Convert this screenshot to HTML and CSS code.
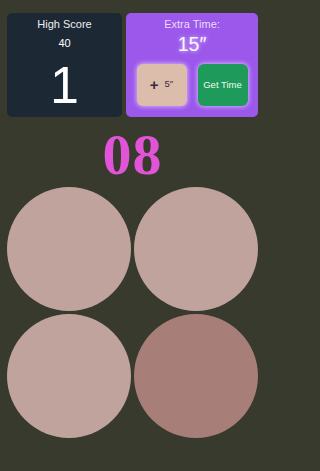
FILE: index.html
```html
<!DOCTYPE html>
<html>
<head>
<meta charset="utf-8">
<link rel="stylesheet" href="styles.css">
</head>
<body>
<div class="top">
  <div class="card score">
    <div class="label">High Score</div>
    <div class="best">40</div>
    <div class="current">1</div>
  </div>
  <div class="card extra">
    <div class="label">Extra Time:</div>
    <div class="time">15″</div>
    <div class="buttons">
      <div class="btn add"><span class="plus">+</span><span class="five">5″</span></div>
      <div class="btn get">Get Time</div>
    </div>
  </div>
</div>
<div class="counter">08</div>
<div class="grid">
  <div class="circle"></div>
  <div class="circle"></div>
  <div class="circle"></div>
  <div class="circle dark"></div>
</div>
</body>
</html>
```
FILE: styles.css
```css
html, body {
  margin: 0;
  padding: 0;
  background: #383a2e;
  font-family: "Liberation Sans", Arial, sans-serif;
  width: 265px;
  height: 471px;
  overflow: hidden;
}
.top {
  display: flex;
  gap: 4px;
  padding: 13px 7px 0 7px;
}
.card {
  height: 104px;
  border-radius: 5px;
  box-sizing: border-box;
  padding-top: 5px;
  display: flex;
  flex-direction: column;
  align-items: center;
  color: #fff;
}
.score {
  width: 115px;
  background: #1c2833;
}
.extra {
  width: 132px;
  background: #9b58eb;
}
.label {
  font-size: 11px;
  line-height: 13px;
  color: #eef0f2;
}
.extra .label {
  color: #eadcfb;
}
.best {
  margin-top: 6px;
  font-size: 11px;
  line-height: 13px;
}
.current {
  margin-top: 8.5px;
  font-size: 52px;
  line-height: 52px;
}
.time {
  margin-top: 1.5px;
  font-size: 19.5px;
  line-height: 22px;
  color: #fbf6ff;
  text-shadow: 0 0 4px rgba(255,255,255,0.7);
}
.buttons {
  margin-top: 9px;
  display: flex;
  gap: 11px;
}
.btn {
  width: 50px;
  height: 42px;
  border-radius: 6px;
  display: flex;
  align-items: center;
  justify-content: center;
  box-shadow: 0 0 4px 1px rgba(225,200,255,0.75);
}
.add {
  background: #dcbcab;
  color: #3b2a3e;
  gap: 6px;
}
.plus {
  font-size: 15px;
  font-weight: bold;
  line-height: 15px;
}
.five {
  font-size: 9.5px;
  line-height: 10px;
  margin-top: -2px;
}
.get {
  background: #1e9a5a;
  color: #eefaf2;
  font-size: 9.5px;
}
.counter {
  margin-top: 9px;
  height: 58px;
  text-align: center;
  font-family: "Liberation Serif", "Times New Roman", serif;
  font-weight: bold;
  font-size: 58px;
  line-height: 58px;
  color: #e153d7;
  letter-spacing: 1px;
}
.grid {
  margin: 3px 0 0 7px;
  display: grid;
  grid-template-columns: 124px 124px;
  gap: 3px;
}
.circle {
  width: 124px;
  height: 124px;
  border-radius: 50%;
  background: #c1a39e;
}
.circle.dark {
  background: #a87e79;
}
```
